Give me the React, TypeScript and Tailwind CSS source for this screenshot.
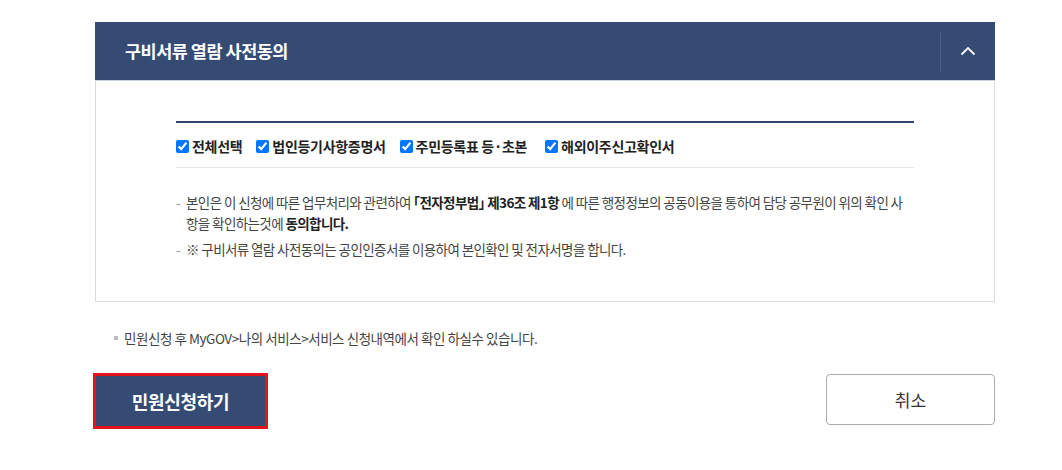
import React from "react";

const font = { fontFamily: '"Noto Sans CJK KR", "Noto Sans", sans-serif' };

function Check({ label, className = "" }: { label: string; className?: string }) {
  return (
    <label className={"flex items-center gap-[3px] " + className}>
      <input type="checkbox" checked readOnly className="w-[13px] h-[13px] m-0 accent-[#0075ff]" />
      <span className="text-[14px] font-bold text-[#222] tracking-[-0.3px]">{label}</span>
    </label>
  );
}

export default function App() {
  return (
    <div className="w-[1062px] h-[470px] bg-white" style={font}>
      <div className="pt-[22px] pl-[95px] w-[995px]">
        <div className="h-[59px] bg-[#354b74] flex items-center border-b border-[#c9d3e2]">
          <div className="flex-1 pl-[30px] text-white text-[17.5px] font-bold tracking-[-0.5px]">구비서류 열람 사전동의</div>
          <div className="w-[55px] h-[40px] border-l border-[#4b5f85] flex items-center justify-center">
            <svg width="16" height="10" viewBox="0 0 16 10" fill="none">
              <path d="M1.5 8.5 L8 2 L14.5 8.5" stroke="white" strokeWidth="1.8" />
            </svg>
          </div>
        </div>
        <div className="h-[221px] border-x border-b border-[#dcdcdc] pl-[80px] pt-[40px]">
          <div className="w-[738px] border-t-2 border-[#34466b]">
            <div className="h-[45px] flex items-center gap-[14px] border-b border-[#e6e6e6] pt-[2px]">
              <Check label="전체선택" />
              <Check label="법인등기사항증명서" />
              <Check label="주민등록표 등·초본" />
              <Check label="해외이주신고확인서" className="ml-[4px]" />
            </div>
          </div>
          <div className="mt-[24px] w-[733px] text-[13.5px] text-[#444] tracking-[-0.6px] leading-[21px]">
            <div className="flex">
              <span className="w-[10px] shrink-0 text-[#999]">-</span>
              <span>
                본인은 이 신청에 따른 업무처리와 관련하여{" "}
                <b className="text-[#222] [font-feature-settings:'halt']">「전자정부법」 제36조 제1항</b>{" "}
                에 따른 행정정보의 공동이용을 통하여 담당 공무원이 위의 확인 사항을 확인하는것에 <b className="text-[#222]">동의합니다.</b>
              </span>
            </div>
            <div className="flex mt-[5px]">
              <span className="w-[10px] shrink-0 text-[#999]">-</span>
              <span>※ 구비서류 열람 사전동의는 공인인증서를 이용하여 본인확인 및 전자서명을 합니다.</span>
            </div>
          </div>
        </div>
        <div className="mt-[26px] pl-[19px] flex items-center text-[13.5px] text-[#444] tracking-[-0.45px]">
          <span className="w-[4px] h-[4px] bg-[#bbb] mr-[6px]" />
          <span>민원신청 후 MyGOV&gt;나의 서비스&gt;서비스 신청내역에서 확인 하실수 있습니다.</span>
        </div>
        <div className="mt-[25px] flex justify-between items-start">
          <div className="-ml-[2px] w-[175px] h-[56px] border-[3px] border-[#e3141d] bg-[#354b74] flex items-center justify-center">
            <span className="text-white text-[18px] font-bold tracking-[-0.3px]">민원신청하기</span>
          </div>
          <div className="mt-[1px] w-[169px] h-[51px] border border-[#aaa] rounded-[4px] flex items-center justify-center">
            <span className="text-[#333] text-[17px]">취소</span>
          </div>
        </div>
      </div>
    </div>
  );
}
